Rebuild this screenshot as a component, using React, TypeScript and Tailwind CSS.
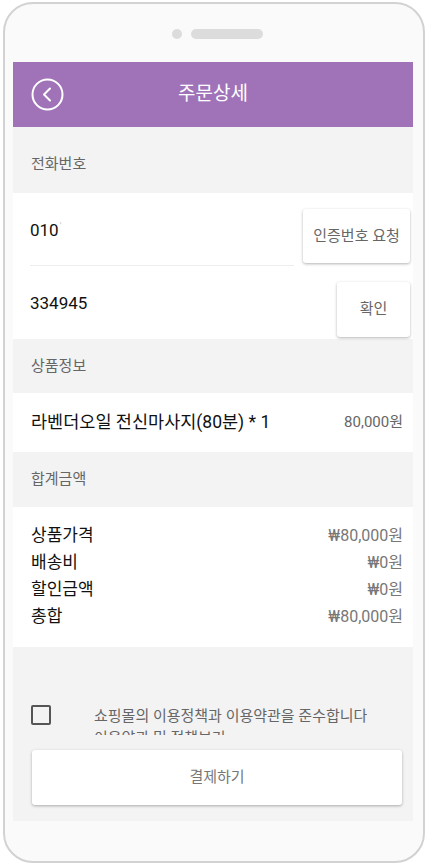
import React from "react";

const font = { fontFamily: 'Roboto, "Noto Sans CJK KR", sans-serif' };

const SectionLabel = ({ label, className }: { label: string; className: string }) => (
  <div className={`flex bg-[#f3f3f3] px-[18px] text-[15px] text-[#666] ${className}`}>{label}</div>
);

const SumRow = ({ label, value }: { label: string; value: string }) => (
  <div className="flex h-[27px] items-center justify-between">
    <span className="text-[17px] text-[#111]">{label}</span>
    <span className="text-[16px] text-[#777]">{value}</span>
  </div>
);

const App = () => {
  return (
    <div className="h-[866px] w-[430px] overflow-hidden bg-white" style={font}>
      <div className="ml-[3px] mt-[2px] h-[861px] w-[422px] overflow-hidden rounded-[30px] border-2 border-[#d2d2d2] bg-[#fafafa]">
        {/* camera */}
        <div className="flex h-[58px] items-center justify-center gap-[9px] pl-[6px] pt-[2px]">
          <div className="h-[10px] w-[10px] rounded-full bg-[#dcdcdc]" />
          <div className="h-[10px] w-[72px] rounded-full bg-[#dcdcdc]" />
        </div>

        <div className="ml-[8px] w-[400px]">
          {/* header */}
          <div className="relative flex h-[65px] items-center justify-center bg-[#a073b9]">
            <svg
              className="absolute left-[18px] top-[16px]"
              width="33"
              height="33"
              viewBox="0 0 33 33"
              fill="none"
              stroke="white"
              strokeWidth="2"
            >
              <circle cx="16.5" cy="16.5" r="15" />
              <path d="M19 10.5 L13 16.5 L19 22.5" strokeLinecap="round" strokeLinejoin="round" />
            </svg>
            <span className="text-[19px] text-white">주문상세</span>
          </div>

          <SectionLabel label="전화번호" className="h-[66px] items-end pb-[18px]" />

          {/* phone verification */}
          <div className="bg-white pb-[2px] pl-[17px] pr-[3px] pt-[16px]">
            <div className="flex items-start gap-[9px]">
              <div className="flex h-[57px] flex-1 items-start border-b border-[#eee] pt-[9px] text-[17px] text-[#111]">
                010<span className="ml-[1px] mt-[4px] text-[9px] leading-none text-[#bbb]">'</span>
              </div>
              <button className="h-[54px] w-[107px] rounded-[3px] bg-white text-[15px] text-[#666] shadow-[0_1px_3px_rgba(0,0,0,0.3)]">
                인증번호 요청
              </button>
            </div>
            <div className="mt-[16px] flex items-start justify-between">
              <div className="pt-[9px] text-[17px] text-[#111]">334945</div>
              <button className="h-[55px] w-[73px] rounded-[3px] bg-white text-[15px] text-[#666] shadow-[0_1px_3px_rgba(0,0,0,0.3)]">
                확인
              </button>
            </div>
          </div>

          <SectionLabel label="상품정보" className="h-[54px] items-center" />

          <div className="flex h-[59px] items-center justify-between bg-white pl-[18px] pr-[10px]">
            <span className="text-[17.5px] text-[#111]">라벤더오일 전신마사지(80분) * 1</span>
            <span className="text-[15px] text-[#666]">80,000원</span>
          </div>

          <SectionLabel label="합계금액" className="h-[55px] items-center" />

          <div className="bg-white pb-[17px] pl-[18px] pr-[10px] pt-[15px]">
            <SumRow label="상품가격" value="₩80,000원" />
            <SumRow label="배송비" value="₩0원" />
            <SumRow label="할인금액" value="₩0원" />
            <SumRow label="총합" value="₩80,000원" />
          </div>

          {/* agreement + pay */}
          <div className="h-[174px] bg-[#f3f3f3] pt-[58px]">
            <div className="flex items-start pl-[18px]">
              <div className="h-[20px] w-[20px] rounded-[2px] border-2 border-[#555]" />
              <div className="ml-[43px] h-[30px] overflow-hidden text-[15px] leading-[22px] text-[#666]">
                쇼핑몰의 이용정책과 이용약관을 준수합니다
                <br />
                이용약관 및 정책보기
              </div>
            </div>
            <button className="ml-[19px] mt-[15px] h-[55px] w-[370px] rounded-[3px] bg-white text-[15px] text-[#777] shadow-[0_1px_3px_rgba(0,0,0,0.3)]">
              결제하기
            </button>
          </div>
        </div>
      </div>
    </div>
  );
};

export default App;
